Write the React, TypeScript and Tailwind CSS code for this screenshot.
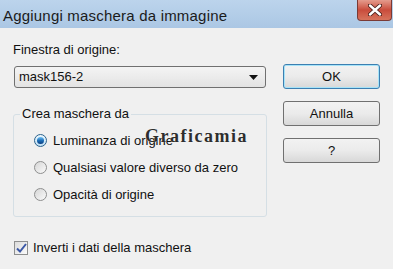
const ui = { fontFamily: '"Liberation Sans", Arial, sans-serif' }

function Radio({ checked, label }: { checked?: boolean; label: string }) {
  return (
    <div className="flex items-center h-[27px]">
      <span
        className={`w-[13px] h-[13px] rounded-full border flex items-center justify-center shrink-0 ${
          checked
            ? 'border-[#2c628b] bg-gradient-to-b from-[#eaf6fd] to-[#bfe0f5]'
            : 'border-[#8e8f8f] bg-gradient-to-br from-[#d6d6d6] to-[#fafafa]'
        }`}
      >
        {checked && (
          <span className="w-[7px] h-[7px] rounded-full bg-gradient-to-b from-[#6ec2f7] via-[#1d6fb8] to-[#0b3d80]" />
        )}
      </span>
      <span className="ml-[6px] text-[13px] text-[#111]">{label}</span>
    </div>
  )
}

function Button({ label, focused }: { label: string; focused?: boolean }) {
  return (
    <button
      className={`w-[97px] h-[25px] rounded-[3px] border text-[13px] text-[#111] bg-gradient-to-b from-[#f2f2f2] via-[#ebebeb] to-[#d8d8d8] ${
        focused ? 'border-[#3c7fb1] shadow-[inset_0_0_0_1px_#a6e3f8]' : 'border-[#707070]'
      }`}
    >
      {label}
    </button>
  )
}

export default function App() {
  return (
    <div className="relative w-[393px] h-[269px] bg-[#f0f0f0] overflow-hidden" style={ui}>
      {/* Title bar */}
      <div className="h-[28px] flex items-start bg-gradient-to-b from-[#bcd4ec] to-[#abc7e4]">
        <span className="ml-[3px] mt-[5px] text-[15px] tracking-[0.2px] text-[#1b1b1b] flex-1">
          Aggiungi maschera da immagine
        </span>
        <div className="mr-[1px] w-[35px] h-[21px] rounded-b-[4px] border border-t-0 border-[#7a3a35] bg-gradient-to-b from-[#e49b8d] via-[#c94c3c] to-[#d6735c] flex items-center justify-center">
          <svg width="14" height="12" viewBox="0 0 14 12">
            <path d="M2 1.5 L12 10.5 M12 1.5 L2 10.5" stroke="#4a1f1a" strokeWidth="4.2" strokeLinecap="round" />
            <path d="M2 1.5 L12 10.5 M12 1.5 L2 10.5" stroke="#fff" strokeWidth="2.4" strokeLinecap="round" />
          </svg>
        </div>
      </div>

      {/* Body */}
      <div className="flex">
        <div className="w-[270px] pl-[13px]">
          <div className="mt-[14px] text-[13px] text-[#111] leading-[15px]">Finestra di origine:</div>
          <div className="mt-[9px] ml-[1px] w-[252px] h-[22px] rounded-[3px] border border-[#707070] bg-gradient-to-b from-[#f4f4f4] to-[#e3e3e3] flex items-center px-[4px]">
            <span className="flex-1 text-[13px] text-[#111]">mask156-2</span>
            <svg width="9" height="5" viewBox="0 0 9 5" className="mr-[3px]">
              <path d="M0 0 H9 L4.5 5 Z" fill="#111" />
            </svg>
          </div>

          {/* Group box */}
          <div className="mt-[26px] w-[254px] h-[103px] border border-[#d5dfe5] rounded-[3px] pl-[20px]">
            <div className="-mt-[9px] -ml-[14px] w-fit px-[2px] bg-[#f0f0f0] text-[13px] text-[#111] leading-[15px]">
              Crea maschera da
            </div>
            <div className="mt-[6px]">
              <Radio checked label="Luminanza di origine" />
              <Radio label="Qualsiasi valore diverso da zero" />
              <Radio label="Opacità di origine" />
            </div>
          </div>

          <div className="mt-[21px] ml-[1px] flex items-center">
            <span className="w-[14px] h-[14px] border border-[#8e8f8f] bg-gradient-to-br from-[#dcdcdc] to-[#fbfbfb] flex items-center justify-center">
              <svg width="11" height="10" viewBox="0 0 11 10">
                <path d="M1 5.5 L4 8.5 L10 1" stroke="#3b58a6" strokeWidth="2" fill="none" />
              </svg>
            </span>
            <span className="ml-[5px] text-[13px] text-[#111]">Inverti i dati della maschera</span>
          </div>
        </div>

        <div className="ml-[13px] pt-[36px] flex flex-col gap-[12px]">
          <Button label="OK" focused />
          <Button label="Annulla" />
          <Button label="?" />
        </div>
      </div>

      {/* Watermark */}
      <div
        className="absolute left-[145px] top-[123px] text-[18px] font-bold tracking-[1.5px] text-[#2e2e2e]"
        style={{ fontFamily: '"Liberation Serif", serif', textShadow: '0 0 1px #fff' }}
      >
        Graficamia
      </div>
    </div>
  )
}
